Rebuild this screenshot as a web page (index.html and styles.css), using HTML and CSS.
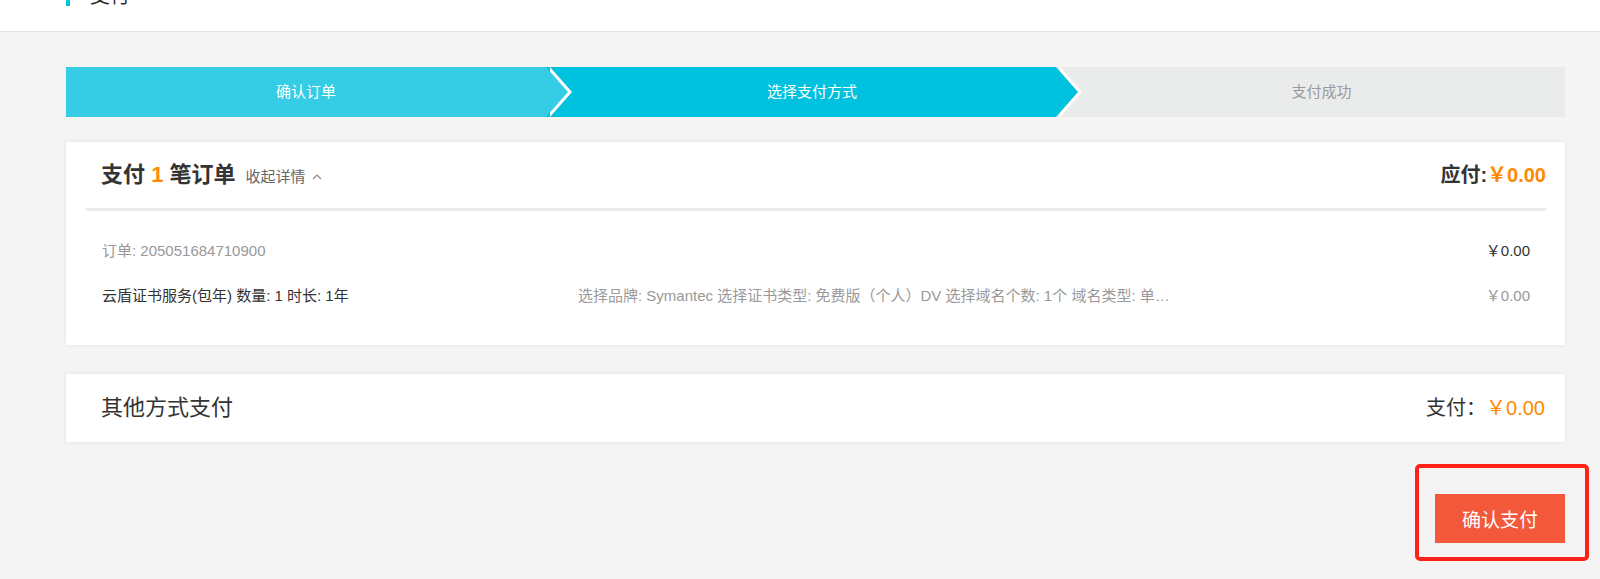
FILE: index.html
```html
<!DOCTYPE html>
<html lang="zh-CN">
<head>
    <meta charset="UTF-8">
    <meta name="viewport" content="width=device-width, initial-scale=1.0">
    <title>支付</title>
    <link rel="stylesheet" href="styles.css">
</head>
<body>
    <div class="topbar">
        <div class="topbar-title">支付</div>
    </div>

    <div class="main">
        <ul class="steps">
            <li class="step step-done">确认订单</li>
            <li class="step step-current">选择支付方式</li>
            <li class="step">支付成功</li>
        </ul>

        <div class="card order-card">
            <div class="order-head">
                <div class="order-title">支付 <span class="num">1</span> 笔订单</div>
                <a class="toggle">收起详情
                    <svg class="caret" width="10" height="7" viewBox="0 0 10 7">
                        <polyline points="1,6 5,2 9,6" fill="none" stroke="#888" stroke-width="1.2"/>
                    </svg>
                </a>
                <div class="due">应付:<span class="price">￥0.00</span></div>
            </div>
            <div class="order-list">
                <div class="order-row order-no">
                    <span class="wide">订单: 205051684710900</span>
                    <span class="amount">￥0.00</span>
                </div>
                <div class="order-row">
                    <span class="item-name">云盾证书服务(包年) 数量: 1 时长: 1年</span>
                    <span class="item-desc">选择品牌: Symantec 选择证书类型: 免费版（个人）DV 选择域名个数: 1个 域名类型: 单域名</span>
                    <span class="amount muted">￥0.00</span>
                </div>
            </div>
        </div>

        <div class="card other-card">
            <div class="other-title">其他方式支付</div>
            <div class="other-pay">支付：<span class="price">￥0.00</span></div>
        </div>

        <div class="actions">
            <div class="btn-wrap">
                <button class="pay-btn">确认支付</button>
            </div>
        </div>
    </div>
</body>
</html>
```

FILE: styles.css
```css
* {
    box-sizing: border-box;
}

body {
    margin: 0;
    background-color: #f4f4f4;
    color: #333;
    font-family: "Liberation Sans", "Noto Sans CJK SC", sans-serif;
    line-height: 1.4;
}

/* barra superior (rolada, título cortado) */
.topbar {
    height: 32px;
    background-color: #fff;
    border-bottom: 1px solid #e1e1e1;
    overflow: hidden;
    padding-left: 66px;
}

.topbar-title {
    margin-top: -14px;
    border-left: 4px solid #00c1de;
    padding-left: 20px;
    font-size: 20px;
    line-height: 20px;
    color: #333;
}

.main {
    padding: 35px 35px 20px 66px;
}

/* passos */
.steps {
    list-style: none;
    margin: 0;
    padding: 0;
    display: flex;
    height: 50px;
}

.step {
    position: relative;
    flex: 1;
    padding-left: 22px;
    background-color: #eaeceb;
    color: #999;
    font-size: 15px;
    line-height: 50px;
    text-align: center;
}

.step-done {
    flex: 0 0 480px;
    padding-left: 0;
    background-color: #35cde5;
    color: #fff;
}

.step-current {
    flex: 0 0 510px;
    background-color: #00c1de;
    color: #fff;
}

.step-done::before,
.step-current::before,
.step-done::after,
.step-current::after {
    content: '';
    position: absolute;
    top: 0;
    border-style: solid;
    border-width: 25px 0 25px 22px;
    border-color: transparent;
}

.step-done::before,
.step-current::before {
    right: -26px;
    border-left-color: #fff;
    z-index: 1;
}

.step-done::after,
.step-current::after {
    right: -22px;
    z-index: 2;
}

.step-done::after {
    border-left-color: #35cde5;
}

.step-current::after {
    border-left-color: #00c1de;
}

/* cartões */
.card {
    background-color: #fff;
    box-shadow: 0 0 4px rgba(0, 0, 0, 0.08);
}

.order-card {
    margin-top: 25px;
    padding: 0 19px 0 20px;
}

.order-head {
    display: flex;
    align-items: center;
    height: 69px;
    padding-left: 15px;
    border-bottom: 3px solid #ebebeb;
}

.order-title {
    font-size: 22px;
    font-weight: bold;
    line-height: 30px;
}

.num,
.price {
    color: #ff8a00;
}

.toggle {
    margin-left: 10px;
    margin-top: 3px;
    font-size: 15px;
    color: #666;
    cursor: pointer;
}

.caret {
    margin-left: 2px;
    vertical-align: 2px;
}

.due {
    margin-left: auto;
    font-size: 20px;
    font-weight: bold;
}

.order-list {
    padding: 17px 16px 27px;
}

.order-row {
    display: grid;
    grid-template-columns: 476px 600px 1fr;
    align-items: center;
    height: 45px;
    font-size: 15px;
    color: #333;
}

.order-no {
    color: #999;
}

.wide {
    grid-column: 1 / 3;
}

.item-desc {
    color: #999;
    white-space: nowrap;
    overflow: hidden;
    text-overflow: ellipsis;
}

.amount {
    text-align: right;
    color: #333;
}

.amount.muted {
    color: #999;
}

.other-card {
    margin-top: 29px;
    height: 68px;
    display: flex;
    align-items: center;
    padding: 0 20px 0 35px;
}

.other-title {
    font-size: 22px;
}

.other-pay {
    margin-left: auto;
    font-size: 20px;
}

/* botão */
.actions {
    display: flex;
    justify-content: flex-end;
    margin-top: 52px;
}

.btn-wrap {
    position: relative;
}

.pay-btn {
    display: block;
    width: 130px;
    height: 49px;
    border: none;
    background-color: #f4583a;
    color: #fff;
    font-family: inherit;
    font-size: 19px;
    cursor: pointer;
}

.btn-wrap::after {
    content: '';
    position: absolute;
    left: -20px;
    top: -30px;
    right: -24px;
    bottom: -18px;
    border: 4px solid #ff2216;
    border-radius: 5px;
    pointer-events: none;
}
```
